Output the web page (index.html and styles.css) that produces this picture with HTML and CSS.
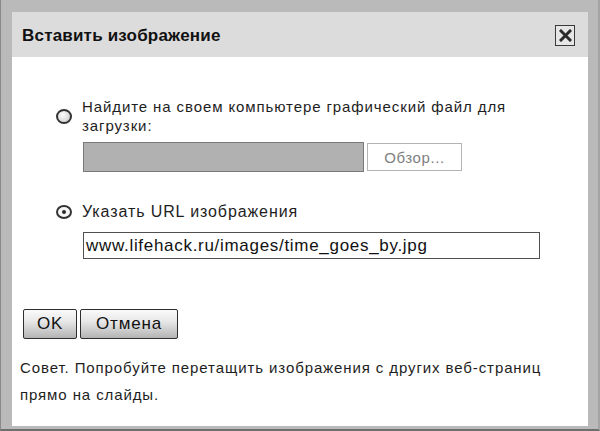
FILE: index.html
```html
<!DOCTYPE html>
<html lang="ru">
<head>
<meta charset="utf-8">
<link rel="stylesheet" href="styles.css">
</head>
<body>
<div class="frame">
  <div class="dialog">
    <div class="header">
      <span class="title">Вставить изображение</span>
      <span class="close">
        <svg width="13" height="13" viewBox="0 0 13 13"><path d="M2 2 L11 11 M11 2 L2 11" stroke="#2a2a2a" stroke-width="3" stroke-linecap="square"/></svg>
      </span>
    </div>
    <div class="body">
      <div class="option option-file">
        <span class="radio"></span>
        <div class="opt-main">
          <div class="label">Найдите на своем компьютере графический файл для<br>загрузки:</div>
          <div class="file-row">
            <span class="file-field"></span>
            <span class="browse">Обзор...</span>
          </div>
        </div>
      </div>
      <div class="option option-url">
        <span class="radio checked"></span>
        <div class="opt-main">
          <div class="label label-url">Указать URL изображения</div>
          <div class="url-field">www.lifehack.ru/images/time_goes_by.jpg</div>
        </div>
      </div>
      <div class="buttons">
        <span class="btn btn-ok">OK</span>
        <span class="btn btn-cancel">Отмена</span>
      </div>
      <p class="tip">Совет. Попробуйте перетащить изображения с других веб-страниц<br>прямо на слайды.</p>
    </div>
  </div>
</div>
</body>
</html>
```

FILE: styles.css
```css
html, body {
  margin: 0;
  padding: 0;
}
body {
  width: 600px;
  height: 431px;
  overflow: hidden;
  font-family: "Liberation Sans", Arial, sans-serif;
  color: #1e1e1e;
}
.frame {
  box-sizing: border-box;
  width: 600px;
  height: 431px;
  background: #bababa;
  border-left: 1px solid #8a8a8a;
  border-bottom: 2px solid #6e6e6e;
  border-right: 2px solid #a4a4a4;
  padding: 12px 10px 3px 11px;
}
.dialog {
  background: #fff;
  height: 100%;
  display: flex;
  flex-direction: column;
}
.header {
  height: 45px;
  flex: none;
  background: #dcdcdc;
  display: flex;
  align-items: center;
  justify-content: space-between;
  padding: 0 13px 0 10px;
}
.title {
  font-weight: bold;
  font-size: 17px;
  letter-spacing: 0.2px;
  color: #111;
  padding-top: 2px;
}
.close {
  box-sizing: border-box;
  width: 20px;
  height: 21px;
  border: 1px solid #3a3a3a;
  background: #e6e6e6;
  display: flex;
  align-items: center;
  justify-content: center;
  margin-top: 2px;
}
.body {
  padding: 0;
  font-size: 15px;
}
.option {
  display: flex;
  align-items: flex-start;
  margin-left: 44px;
}
.option-file {
  margin-top: 40px;
}
.radio {
  box-sizing: border-box;
  width: 16px;
  height: 15px;
  border-radius: 50%;
  border: 2px solid #333;
  background: radial-gradient(ellipse at 40% 35%, #fdfdfd 0%, #d0d0d0 85%);
  margin-top: 12px;
  margin-right: 10px;
  flex: none;
  position: relative;
}
.radio.checked {
  background: #f6f6f6;
  height: 14px;
  margin-top: 3px;
}
.radio.checked::after {
  content: "";
  position: absolute;
  left: 4px;
  top: 3px;
  width: 4px;
  height: 4px;
  border-radius: 50%;
  background: #2a2a2a;
}
.label {
  line-height: 19px;
  letter-spacing: 0.9px;
  color: #1e1e1e;
}
.label-url {
  font-size: 16px;
}
.file-row {
  display: flex;
  gap: 3px;
  margin-top: 7px;
  margin-left: 1px;
}
.file-field {
  box-sizing: border-box;
  width: 281px;
  height: 30px;
  background: #b1b1b1;
  border: 1px solid #7a7a7a;
}
.browse {
  box-sizing: border-box;
  width: 95px;
  height: 28px;
  margin-top: 1px;
  border: 1px solid #b4b4b4;
  background: #fff;
  color: #808080;
  letter-spacing: 0.6px;
  display: flex;
  align-items: center;
  justify-content: center;
}
.option-url {
  margin-top: 30px;
}
.url-field {
  box-sizing: border-box;
  width: 457px;
  height: 27px;
  margin-top: 11px;
  margin-left: 1px;
  border: 1px solid #505050;
  padding: 0 2px;
  line-height: 25px;
  font-size: 17px;
  letter-spacing: 0.7px;
  color: #111;
}
.buttons {
  display: flex;
  gap: 3px;
  margin-top: 50px;
  margin-left: 11px;
}
.btn {
  box-sizing: border-box;
  height: 30px;
  border: 1px solid #2e2e2e;
  border-radius: 2px;
  background: linear-gradient(#fafafa, #e8e8e8 40%, #b4b4b4);
  display: flex;
  align-items: center;
  justify-content: center;
  font-size: 17px;
  letter-spacing: 0.8px;
  color: #111;
}
.btn-ok {
  width: 54px;
}
.btn-cancel {
  width: 98px;
}
.tip {
  margin: 15px 0 0 8px;
  line-height: 27px;
  font-size: 15px;
  letter-spacing: 0.9px;
  color: #1e1e1e;
}
```
